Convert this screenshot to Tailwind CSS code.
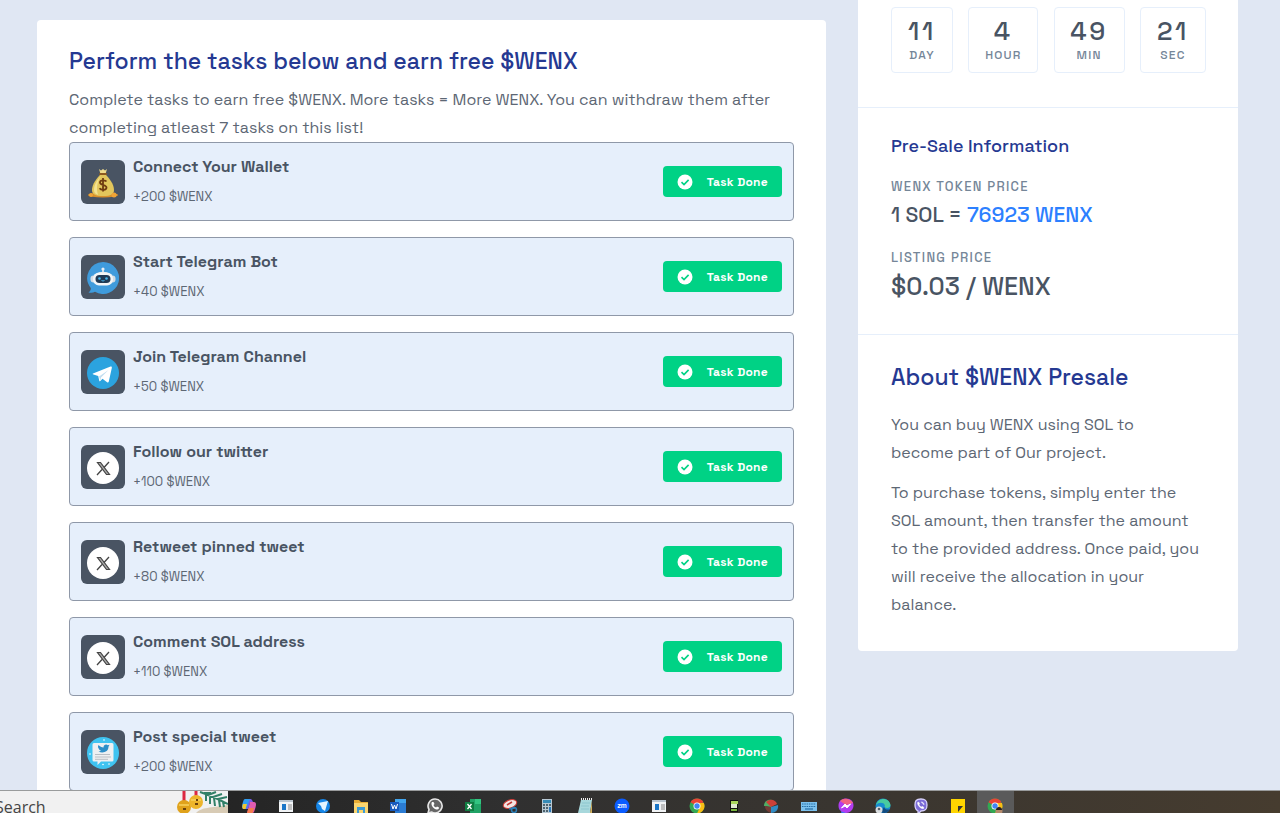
<!DOCTYPE html>
<html lang="en">
  <head>
    <meta charset="UTF-8" />
    <meta name="viewport" content="width=device-width, initial-scale=1.0" />
    <title>WENX Presale - Tasks</title>
    <script src="https://cdn.jsdelivr.net/npm/@tailwindcss/browser@4"></script>
  </head>
  <body class="flex h-screen flex-col overflow-hidden bg-[#e0e7f3] font-['Space_Grotesk',Inter,sans-serif] text-[#495463]">
    <!-- Icons -->
    <svg class="hidden">
      <symbol id="wallet" viewBox="0 0 32 32">
        <ellipse cx="16" cy="28" rx="15" ry="2.6" fill="#d9912b" />
        <path d="M12 2l2 1.5L16 2l2 1.500L20 2l-1.500 5h-5z" fill="#f0dc8c" />
        <path d="M14 7h4c4 4 9 10 9 16 0 4-3 6-11 6S5 27 5 23c0-6 5-12 9-16z" fill="#e2c65c" />
        <path d="M14 9c-4 4-7 9-7 14 0 2 1 4 4 5-2-7-1-13 3-19z" fill="#f3e291" />
        <rect x="12" y="6" width="8" height="2" rx="1" fill="#8d5a20" />
        <path d="M19.500 14.500c-1-1.500-6.500-2-6.500 1 0 3.200 6.500 1.800 6.500 5 0 3-5.500 2.800-7 .8M16 11v13.500" fill="none" stroke="#6f3b12" stroke-width="1.800" />
        <circle cx="4" cy="28" r="2" fill="#f0a437" />
        <circle cx="27" cy="28" r="2.500" fill="#f0a437" />
      </symbol>
      <symbol id="bot" viewBox="0 0 32 32">
        <path d="M16 0a16 16 0 1 1-8 29.800C6 31 4 31 1.500 30.500 3.500 29 4 27.500 3.800 26A16 16 0 0 1 16 0z" fill="#3f9bdc" />
        <path d="M16 6v5" stroke="#e8edf2" stroke-width="1.600" />
        <circle cx="16" cy="7" r="1.600" fill="#e8edf2" />
        <path d="M10 12c2-3 10-3 12 0z" fill="#dfe6ec" />
        <rect x="3.500" y="13.500" width="25" height="7" rx="3" fill="#d3dce4" />
        <rect x="6" y="10.500" width="20" height="13" rx="6" fill="#f2f5f7" />
        <rect x="8.500" y="13" width="15" height="8" rx="4" fill="#1f3a55" />
        <circle cx="12.500" cy="16.500" r="1.300" fill="#45b4ea" />
        <circle cx="19.500" cy="16.500" r="1.300" fill="#45b4ea" />
        <path d="M14.500 18.500q1.500 1 3 0" stroke="#45b4ea" fill="none" />
      </symbol>
      <symbol id="telegram" viewBox="0 0 32 32">
        <circle cx="16" cy="16" r="16" fill="#2ba3df" />
        <path d="M6 16.500 23.500 9.500c1-.3 1.600.2 1.300 1.500l-3 13.500c-.2 1-.9 1.200-1.700.7l-4.600-3.400-2.200 2.200c-.6.5-1 .4-1.100-.6l-1-4.300-4.700-1.500c-1-.3-1-.8-.5-1.100z" fill="#fff" />
        <path d="M12 19.500 21.500 13l-7.500 7.500-.6 3z" fill="#c3dff0" />
      </symbol>
      <symbol id="x" viewBox="0 0 32 32">
        <circle cx="16" cy="16" r="16" fill="#fff" />
        <path d="M10.500 10.500h3l9 12h-3z" fill="#aaa" stroke="#444" stroke-width="1.200" />
        <path d="M22 10l-5 5.500M15 17.500l-5 5.500" stroke="#444" stroke-width="1.300" />
      </symbol>
      <symbol id="post" viewBox="0 0 32 32">
        <circle cx="16" cy="16" r="16" fill="#3fc3f0" />
        <path d="M7 6h18a1.500 1.500 0 0 1 1.500 1.500V23a1.500 1.500 0 0 1-1.500 1.500H14L10.500 28v-3.500H7A1.500 1.500 0 0 1 5.500 23V7.500A1.500 1.500 0 0 1 7 6z" fill="#eef0f2" />
        <path d="M8 17.500h15M8 20h16M8 22.300h13" stroke="#b9bec4" />
        <path d="M11.500 8c1.500 1.500 3 2.300 5 2.400 0-3 3-3.500 4.300-2.200l1.700-.5-1 2c0 5-5.500 7-10 4.800 1.200 0 2-.3 2.500-.9-1.500-.5-2-1-2.200-1.900-1-1-1-2.500-.3-3.700z" fill="#2c8fc9" />
        <circle cx="3" cy="17" r=".8" fill="#fff" />
        <circle cx="17" cy="3" r=".8" fill="#fff" />
        <circle cx="16" cy="27.500" r=".8" fill="#fff" />
        <circle cx="22" cy="27" r=".8" fill="#fff" />
      </symbol>
      <symbol id="check" viewBox="0 0 16 16">
        <circle cx="8" cy="8" r="7.500" fill="#fff" />
        <path d="M4.500 8.200 7 10.600l4.600-4.700" fill="none" stroke="#00d285" stroke-width="1.600" />
      </symbol>
    </svg>

    <main class="grid min-h-0 flex-1 grid-cols-[1fr_380px] items-start gap-8 overflow-hidden pr-[42px] pl-[37px]">
      <!-- Task list -->
      <section class="mt-5 rounded bg-white px-8 pt-[27px] pb-8">
        <h1 class="text-[23px] leading-7 font-medium text-[#253992]">
          Perform the tasks below and earn free $WENX
        </h1>
        <p class="mt-[11px] text-base leading-7 text-[#5d6774]">
          Complete tasks to earn free $WENX. More tasks = More WENX. You can withdraw them after completing atleast 7 tasks on this list!
        </p>
        <ul id="taskList" class="flex flex-col gap-4"></ul>
      </section>

      <!-- Sidebar -->
      <aside class="rounded-b bg-white">
        <div class="flex justify-between border-b border-[#e6effb] pt-[7px] pr-8 pb-[34px] pl-[33px] text-center font-medium">
          <div class="w-[62px] rounded border border-[#e6effb] pt-[7px] pb-[9px]">
            <p class="text-[26px] leading-8 tracking-widest">11</p>
            <p class="text-xs leading-4 tracking-widest text-[#758698]">DAY</p>
          </div>
          <div class="w-[70px] rounded border border-[#e6effb] pt-[7px] pb-[9px]">
            <p class="text-[26px] leading-8 tracking-widest">4</p>
            <p class="text-xs leading-4 tracking-widest text-[#758698]">HOUR</p>
          </div>
          <div class="w-[71px] rounded border border-[#e6effb] pt-[7px] pb-[9px]">
            <p class="text-[26px] leading-8 tracking-widest">49</p>
            <p class="text-xs leading-4 tracking-widest text-[#758698]">MIN</p>
          </div>
          <div class="w-[66px] rounded border border-[#e6effb] pt-[7px] pb-[9px]">
            <p class="text-[26px] leading-8 tracking-widest">21</p>
            <p class="text-xs leading-4 tracking-widest text-[#758698]">SEC</p>
          </div>
        </div>

        <div class="border-b border-[#e6effb] px-[33px] pt-6 pb-8">
          <h2 class="text-lg leading-7 font-medium text-[#253992]">Pre-Sale Information</h2>
          <h3 class="mt-[19px] text-[13px] leading-4 font-medium tracking-widest text-[#758698]">WENX TOKEN PRICE</h3>
          <p class="mt-1 text-[21px] leading-8 font-medium">
            1 SOL = <span class="text-[#2c80ff]">76923 WENX</span>
          </p>
          <h3 class="mt-[19px] text-[13px] leading-4 font-medium tracking-widest text-[#758698]">LISTING PRICE</h3>
          <p class="mt-1 text-[25px] leading-8 font-medium">$0.03 / WENX</p>
        </div>

        <div class="px-[33px] pt-7 pb-8">
          <h2 class="text-[23px] leading-7 font-medium text-[#253992]">About $WENX Presale</h2>
          <p class="mt-5 text-base leading-7 text-[#5d6774]">
            You can buy WENX using SOL to<br />
            become part of Our project.
          </p>
          <p class="mt-3 text-base leading-7 text-[#5d6774]">
            To purchase tokens, simply enter the SOL amount, then transfer the amount to the provided address. Once paid, you will receive the allocation in your balance.
          </p>
        </div>
      </aside>
    </main>

    <!-- Taskbar -->
    <footer class="flex h-[23px] shrink-0 overflow-hidden border-t border-[#999b9c] bg-linear-to-r from-[#1c1c1c] via-[#303030] via-40% to-[#463c2f]">
      <div class="flex w-[228px] shrink-0 justify-between bg-[#f1f1f1]">
        <label for="search" class="sr-only">Search</label>
        <input id="search" type="text" placeholder="Search" class="mt-1 -ml-[5px] h-6 w-32 bg-transparent font-['Open_Sans',sans-serif] text-base text-[#333] placeholder-[#444] outline-none" />
        <svg class="h-[22px] w-[52px]" viewBox="0 0 52 22">
          <path d="M20 22c6-6 14-5 32-8v8z" fill="#d8cbb5" />
          <path d="M24 1c9 3 18 7 28 12M28 2l7 0M32 4l8-3M37 6l9-3M42 8l9-2M30 3l0 7M34 5l0 8M38 7l1 8M43 9l1 7M47 11l1 5" stroke="#328068" stroke-width="2" fill="none" />
          <path d="M8 0v10M20 0v6" stroke="#dc2840" stroke-width="3" />
          <circle cx="8" cy="16" r="7" fill="#e0a21b" />
          <circle cx="20" cy="11" r="7" fill="#edb52b" />
          <path d="M3 14h10M15 9h10" stroke="#f7d25e" stroke-width="1.500" />
          <path d="M7 18h3M19 13h3M21 8v2" stroke="#6b420c" stroke-width="2" />
        </svg>
      </div>
      <nav id="taskbar" class="ml-0.5 grid w-[784px] shrink-0 grid-cols-21">
        <svg class="mx-auto mt-[7px] size-4" viewBox="0 0 16 16"><path d="M5 1h5l-3 10H3C0 11 1 7 2 4s1-3 3-3z" fill="#2f9df0" /><path d="M2 6l4 0-1.500 5H3C1 11 1 9 2 6z" fill="#f3c52d" /><path d="M11 15H6L9 4h4c3 0 2 4 1 7s-1 4-3 4z" fill="#e05cb0" /><path d="M9 1c2 0 2 1 3 3H9L7 11H5z" fill="#7b5be8" /><path d="M6 15l1.500-5H13c-1 4-1 5-2 5z" fill="#f47a4d" /></svg>
        <svg class="mx-auto mt-[7px] size-4" viewBox="0 0 16 16"><path d="M1 3h14v11H1z" fill="#f1f3f5" /><path d="M1 2h14v2H1z" fill="#b9c4ce" /><path d="M4 6h4v6H4z" fill="#1a76c8" /><path d="M10 7h4M10 9h4M10 11h4" stroke="#888" /></svg>
        <svg class="mx-auto mt-[7px] size-4" viewBox="0 0 16 16"><circle cx="8" cy="8" r="7" fill="#1686e8" /><path d="M3 5l10-2-3 10-3-2-1-3z" fill="#e4f4ff" /></svg>
        <svg class="mx-auto mt-[7px] size-4" viewBox="0 0 16 16"><path d="M1 2h5l2 2h7v11H1z" fill="#e8ad35" /><path d="M1 5h14v10H1z" fill="#fbd670" /><path d="M4 15V9h8v6h-2v-3H6v3z" fill="#3c9bd5" /></svg>
        <svg class="mx-auto mt-[7px] size-4" viewBox="0 0 16 16"><path d="M5 1h11v14H5z" fill="#2b7cd3" /><path d="M5 1h11v4H5z" fill="#41a5ee" /><path d="M0 4h9v9H0z" fill="#185abd" /><path d="M1.500 6 3 11l1.500-4L6 11l1.500-5" fill="none" stroke="#fff" /></svg>
        <svg class="mx-auto mt-[7px] size-4" viewBox="0 0 16 16"><path d="M8 1a7 7 0 1 1-3.500 13L1 15l1-3.500A7 7 0 0 1 8 1z" fill="#666" stroke="#e8e8e8" stroke-width="1.600" /><path d="M5 4l1.500 0 1 2-1 1c.5 1.500 1.500 2 2.500 2.500l1-1 2 1c0 2-1.500 2-2.500 2C7 11 4 8 4.500 5z" fill="#fff" /></svg>
        <svg class="mx-auto mt-[7px] size-4" viewBox="0 0 16 16"><path d="M5 1h11v14H5z" fill="#21a366" /><path d="M10 1h6v5h-6z" fill="#33c481" /><path d="M0 4h9v9H0z" fill="#107c41" /><path d="M2.500 6l4 5M6.500 6l-4 5" stroke="#fff" stroke-width="1.300" /></svg>
        <svg class="mx-auto mt-[7px] size-4" viewBox="0 0 16 16"><ellipse cx="8" cy="6" rx="7" ry="4" fill="#f3e4e2" stroke="#d33a36" transform="rotate(-20 8 6)" /><path d="M5 7l5-3" stroke="#bf3532" stroke-width="1.500" /><path d="M7 11l6-1" stroke="#2d80b8" stroke-width="1.500" /><circle cx="12" cy="12" r="2.500" fill="none" stroke="#2d80b8" stroke-width="1.500" /></svg>
        <svg class="mx-auto mt-[7px] size-4" viewBox="0 0 16 16"><path d="M3 1h10v14H3z" fill="#b7c9d4" /><path d="M4 2h8v3H4z" fill="#358bb7" /><path d="M4 7h8M4 10h8M4 13h8" stroke="#4e6470" stroke-width="2" stroke-dasharray="2 1" /><path d="M10 9h2v5h-2z" fill="#2c79bb" /></svg>
        <svg class="mx-auto mt-[7px] size-4" viewBox="0 0 16 16"><path d="M4 2h11l-2 13H1z" fill="#a8d8dc" /><path d="M4 1h11" stroke="#eee" stroke-width="2" stroke-dasharray="1 1" /><path d="M5 5h8M4 8h8M4 11h8" stroke="#8cc6ce" /><path d="M15 3l-2 12h2z" fill="#d2b15d" /></svg>
        <svg class="mx-auto mt-[7px] size-4" viewBox="0 0 16 16"><circle cx="8" cy="8" r="7.500" fill="#0b5cff" /><text x="8" y="10" text-anchor="middle" font-size="7" font-weight="700" fill="#fff">zm</text></svg>
        <svg class="mx-auto mt-[7px] size-4" viewBox="0 0 16 16"><path d="M1 3h14v11H1z" fill="#f1f3f5" /><path d="M1 2h14v2H1z" fill="#b9c4ce" /><path d="M4 6h4v6H4z" fill="#1a76c8" /><path d="M10 7h4M10 9h4M10 11h4" stroke="#888" /></svg>
        <svg class="mx-auto mt-[7px] size-4" viewBox="0 0 16 16"><circle cx="8" cy="8" r="7.500" fill="#32a853" /><path d="M8 8 1.500 4.300A7.500 7.500 0 0 1 14.500 4.300z" fill="#e94435" /><path d="M8 5h6.900A7.500 7.500 0 0 1 8 15.500L11 9z" fill="#fabd14" /><circle cx="8" cy="8" r="3.500" fill="#fff" /><circle cx="8" cy="8" r="2.700" fill="#4285f4" /></svg>
        <svg class="mx-auto mt-[7px] size-4" viewBox="0 0 16 16"><path d="M4 2h8v12H4z" fill="#111" /><path d="M5 3h7v3H5z" fill="#a8d65b" /><path d="M5 6h6v4H5z" fill="#dfead0" /><path d="M5 11h6v2H5z" fill="#79b63d" /></svg>
        <svg class="mx-auto mt-[7px] size-4" viewBox="0 0 16 16"><path d="M1 8c0-5 4-7 8-6L8 9z" fill="#4fae65" /><path d="M3 4c4-4 10-2 11 2L8 9z" fill="#cc4038" /><path d="M15 7c1 5-3 8-7 8V9z" fill="#328bc3" /><path d="M2 8l6 1v6c-3-1-6-3-6-7z" fill="#733c36" /></svg>
        <svg class="mx-auto mt-[7px] size-4" viewBox="0 0 16 16"><path d="M0 4h16v9H0z" fill="#7cc1ee" /><path d="M1 6h14M1 8.500h14" stroke="#246ea6" stroke-width="1.200" stroke-dasharray="1.500 .8" /><path d="M4 11h8" stroke="#246ea6" stroke-width="1.200" /></svg>
        <svg class="mx-auto mt-[7px] size-4" viewBox="0 0 16 16"><path d="M8 .5c5 0 7.500 3 7.500 7S12 15 8 15l-4 1-1-3C1 12 .5 10 .5 7.500.5 3 4 .5 8 .5z" fill="#b23cf0" /><path d="M2 3C6-1 13 1 15 5L8 7z" fill="#f26382" /><path d="M1 9c1 4 3 5 7 6l-4 1-1-3z" fill="#2d7cf6" /><path d="M3.500 10 7 6l2 2 3.500-2L9 10 7 8z" fill="#fff" stroke="#fff" /></svg>
        <svg class="mx-auto mt-[7px] size-4" viewBox="0 0 16 16"><circle cx="8" cy="8" r="7.500" fill="#168bd0" /><path d="M1 7C3-1 14-1 15.500 7c0 3-4 4-6 2 2-4-5-6-8.500-2z" fill="#48cba0" /><path d="M9 9c1 3 4 3 6 2-2 4-6 5-9 3z" fill="#124b80" /><circle cx="4" cy="12" r="3.500" fill="#d9dde0" /><circle cx="4" cy="11" r="1.300" fill="#59636b" /></svg>
        <svg class="mx-auto mt-[7px] size-4" viewBox="0 0 16 16"><path d="M8 1c5 0 6 2 6 6s-1 6-6 6l-3 3v-3c-2-1-3-2-3-6s1-6 6-6z" fill="#7c6cd8" stroke="#d7d1fa" stroke-width="1.300" /><path d="M5 4l1.500 1-.5 2 2 2 2-.5L11 10c-1 2-6-1-6.500-5zM8 4c2 0 3 1 3 3" fill="#fff" stroke="#fff" stroke-width=".5" /></svg>
        <svg class="mx-auto mt-[7px] size-4" viewBox="0 0 16 16"><path d="M1 1h14v14H1z" fill="#ffd500" /><path d="M8 8h5l-5 6z" fill="#343434" /></svg>
        <div class="bg-[#5a5a5a]">
          <svg class="mx-auto mt-[7px] size-4" viewBox="0 0 16 16"><circle cx="8" cy="8" r="7.500" fill="#32a853" /><path d="M8 8 1.500 4.300A7.500 7.500 0 0 1 14.500 4.300z" fill="#e94435" /><path d="M8 5h6.900A7.500 7.500 0 0 1 8 15.500L11 9z" fill="#fabd14" /><circle cx="8" cy="8" r="3.500" fill="#fff" /><circle cx="8" cy="8" r="2.700" fill="#4285f4" /><circle cx="12" cy="13" r="3.500" fill="#b58b6d" /><path d="M9 12c0-4 6-4 6 0z" fill="#272020" /></svg>
        </div>
      </nav>
    </footer>

    <script>
      const tasks = [
        { icon: "wallet", title: "Connect Your Wallet", reward: 200 },
        { icon: "bot", title: "Start Telegram Bot", reward: 40 },
        { icon: "telegram", title: "Join Telegram Channel", reward: 50 },
        { icon: "x", title: "Follow our twitter", reward: 100 },
        { icon: "x", title: "Retweet pinned tweet", reward: 80 },
        { icon: "x", title: "Comment SOL address", reward: 110 },
        { icon: "post", title: "Post special tweet", reward: 200 },
      ];

      document.getElementById("taskList").innerHTML = tasks
        .map(
          (task) => `
          <li class="flex h-[79px] items-center gap-2 rounded border border-[#8f98a8] bg-[#e6effb] px-[11px]">
            <span class="flex size-11 items-center justify-center rounded-md bg-[#495463]">
              <svg class="mt-0.5 size-8"><use href="#${task.icon}" /></svg>
            </span>
            <div class="flex-1">
              <h2 class="text-base leading-7 font-semibold">${task.title}</h2>
              <p class="mt-0.5 text-[13px] leading-7 text-[#5d6774]">+${task.reward} $WENX</p>
            </div>
            <button class="flex h-[31px] items-center gap-[14px] rounded bg-[#00d285] px-[14px] text-xs font-bold tracking-wide text-white">
              <svg class="size-4"><use href="#check" /></svg>
              Task Done
            </button>
          </li>`
        )
        .join("");
    </script>
  </body>
</html>
